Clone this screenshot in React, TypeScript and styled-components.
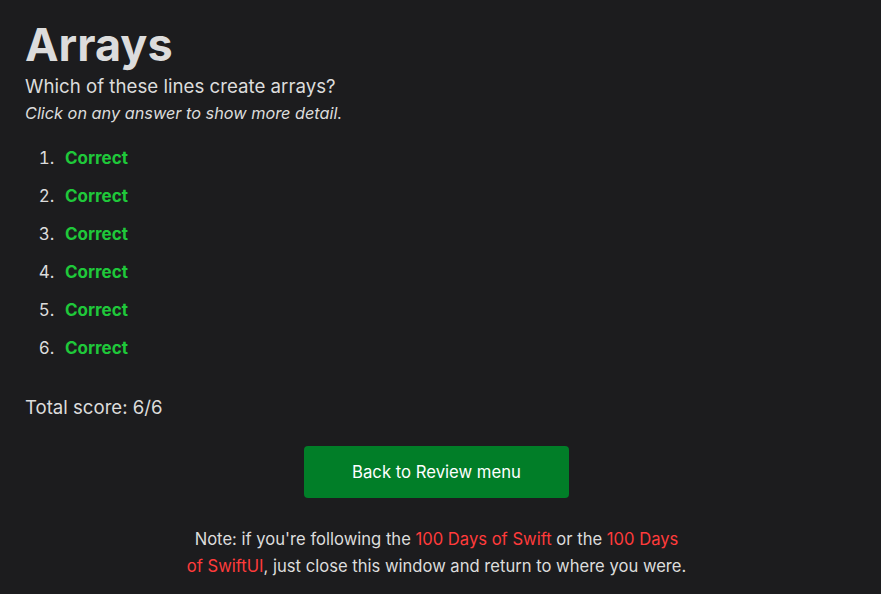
import styled, { createGlobalStyle } from "styled-components";

const GlobalStyle = createGlobalStyle`
    html, body {
        margin: 0;
        padding: 0;
        background: #1c1c1e;
    }
    body {
        font-family: Inter, "Noto Sans", sans-serif;
        color: #dcdcdc;
    }
`;

const Page = styled.div`
    padding: 16px 33px 20px 25px;
`;

const Title = styled.h1`
    margin: 0;
    font-size: 45px;
    font-weight: 700;
    line-height: 58px;
    color: #dcdcdc;
`;

const Question = styled.p`
    margin: 0;
    font-size: 18.7px;
    line-height: 26px;
`;

const Hint = styled.p`
    margin: 0;
    font-size: 16.3px;
    font-style: italic;
    line-height: 26px;
`;

const Answers = styled.ol`
    margin: 20px 0 0;
    padding: 0 0 0 34px;
    font-size: 17px;
`;

const Answer = styled.li`
    line-height: 24px;
    margin-bottom: 14px;
    padding-left: 6px;

    &::marker {
        color: #dcdcdc;
    }
`;

const Result = styled.span<{ correct: boolean }>`
    font-weight: 700;
    color: ${(props) => (props.correct ? "#1fc83a" : "#ff453a")};
    cursor: pointer;
`;

const Score = styled.p`
    margin: 34px 0 0;
    font-size: 18.6px;
    line-height: 26px;
`;

const ButtonRow = styled.div`
    display: flex;
    justify-content: center;
    margin-top: 26px;
`;

const BackButton = styled.button`
    width: 265px;
    height: 52px;
    border: none;
    border-radius: 4px;
    background: #017e28;
    color: #fff;
    font-family: inherit;
    font-size: 16.7px;
    cursor: pointer;
`;

const Note = styled.p`
    margin: 28px auto 0;
    max-width: 501px;
    text-align: center;
    font-size: 16.6px;
    line-height: 27px;
`;

const Link = styled.a`
    color: #ff3b3b;
    text-decoration: none;
`;

function App() {
    const results = [true, true, true, true, true, true];

    return (
        <Page>
            <GlobalStyle />
            <Title>Arrays</Title>
            <Question>Which of these lines create arrays?</Question>
            <Hint>Click on any answer to show more detail.</Hint>
            <Answers>
                {results.map((ok, i) => (
                    <Answer key={i}>
                        <Result correct={ok}>{ok ? "Correct" : "Wrong"}</Result>
                    </Answer>
                ))}
            </Answers>
            <Score>Total score: 6/6</Score>
            <ButtonRow>
                <BackButton>Back to Review menu</BackButton>
            </ButtonRow>
            <Note>
                Note: if you're following the <Link href="#">100 Days of Swift</Link> or the{" "}
                <Link href="#">100 Days of SwiftUI</Link>, just close this window and return to where you were.
            </Note>
        </Page>
    );
}

export default App;
